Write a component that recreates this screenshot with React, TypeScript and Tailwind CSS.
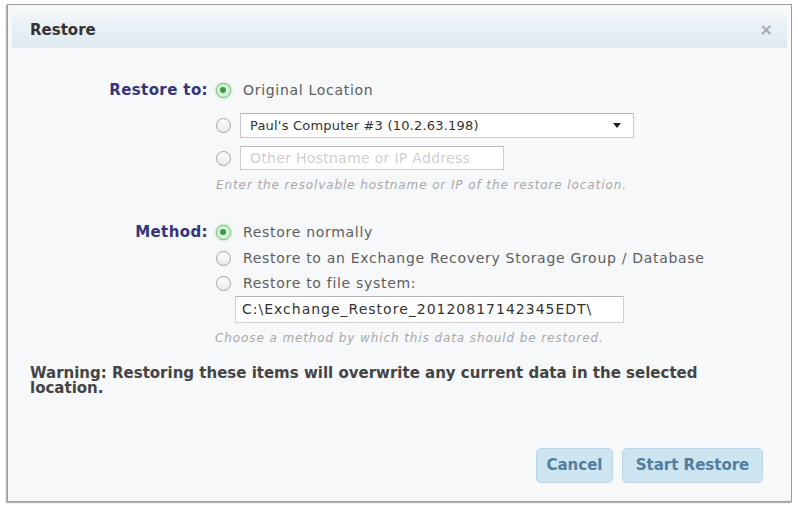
import React from 'react';

const FONT = { fontFamily: '"DejaVu Sans", Verdana, sans-serif' };

function Radio({ checked = false }: { checked?: boolean }) {
    if (checked) {
        return (
            <span className="flex h-[15px] w-[15px] items-center justify-center rounded-full border border-[#7cc27e] bg-[#d9f0d9] shadow-[0_0_3px_#8fd68f]">
                <span className="h-[6px] w-[6px] rounded-full bg-[#3f9a47]" />
            </span>
        );
    }
    return (
        <span className="block h-[15px] w-[15px] rounded-full border border-[#a3a3a3] bg-gradient-to-b from-white to-[#e9e9e9]" />
    );
}

function Label({ children }: { children?: React.ReactNode }) {
    return (
        <div className="w-[196px] shrink-0 text-right text-[15px] font-bold tracking-[0.4px] text-[#35347c]">
            {children}
        </div>
    );
}

function Row({ label, checked, children, className = '' }: { label?: string; checked?: boolean; children: React.ReactNode; className?: string }) {
    return (
        <div className={`flex items-center ${className}`}>
            <Label>{label}</Label>
            <div className="flex w-[32px] shrink-0 justify-center pr-[2px]">
                <Radio checked={checked} />
            </div>
            {children}
        </div>
    );
}

export default function App() {
    return (
        <div className="h-[506px] w-[798px] overflow-hidden bg-white pl-[7px] pt-[4px]" style={FONT}>
            <div className="flex h-[498px] w-[785px] flex-col border border-[#9d9d9d] bg-[#f6f8fa] p-[4px] pt-[8px] shadow-[-1px_1px_1px_#b5b5b5]">
                {/* title bar */}
                <div className="flex h-[35px] shrink-0 items-center justify-between rounded-t-[5px] border-b border-[#e3ebf1] bg-gradient-to-b from-[#f1f6f9] to-[#dde9f1] pl-[18px] pr-[14px]">
                    <span className="text-[15px] font-bold text-[#333]">Restore</span>
                    <span className="text-[16px] font-bold leading-none text-[#a2a8ad]">×</span>
                </div>

                <div className="flex flex-1 flex-col pt-[30px] text-[14px] tracking-[0.7px] text-[#5e5e5e]">
                    <Row label="Restore to:" checked className="h-[24px]">
                        <span className="pl-[3px]">Original Location</span>
                    </Row>
                    <Row className="mt-[11px] h-[25px]">
                        <div className="flex h-[25px] w-[394px] items-center justify-between border border-[#c9c9c9] border-t-[#b3b3b3] bg-white pl-[9px] pr-[12px] text-[13px] tracking-[0.2px] text-[#333]">
                            <span>Paul's Computer #3 (10.2.63.198)</span>
                            <svg width="8" height="5" viewBox="0 0 8 5">
                                <path d="M0 0 H8 L4 5 Z" fill="#222" />
                            </svg>
                        </div>
                    </Row>
                    <Row className="mt-[8px] h-[24px]">
                        <div className="flex h-[24px] w-[264px] items-center border border-[#cfcfcf] border-t-[#bababa] bg-white pl-[9px] text-[14px] tracking-[0.3px] text-[#d0d0d0]">
                            Other Hostname or IP Address
                        </div>
                    </Row>
                    <div className="mt-[7px] flex h-[16px] items-center">
                        <div className="w-[204px] shrink-0" />
                        <span className="text-[12px] italic tracking-[0.9px] text-[#a9a9a9]">
                            Enter the resolvable hostname or IP of the restore location.
                        </span>
                    </div>

                    <Row label="Method:" checked className="mt-[26px] h-[26px]">
                        <span className="pl-[3px]">Restore normally</span>
                    </Row>
                    <Row className="h-[26px]">
                        <span className="pl-[3px]">Restore to an Exchange Recovery Storage Group / Database</span>
                    </Row>
                    <Row className="h-[25px]">
                        <span className="pl-[3px]">Restore to file system:</span>
                    </Row>
                    <div className="flex">
                        <div className="w-[223px] shrink-0" />
                        <div className="flex h-[27px] w-[389px] items-center border border-[#cfcfcf] border-t-[#b5b5b5] bg-white pl-[6px] text-[14px] tracking-[1px] text-[#333]">
                            C:\Exchange_Restore_20120817142345EDT\
                        </div>
                    </div>
                    <div className="mt-[7px] flex h-[16px] items-center">
                        <div className="w-[203px] shrink-0" />
                        <span className="text-[12px] italic tracking-[0.9px] text-[#a9a9a9]">
                            Choose a method by which this data should be restored.
                        </span>
                    </div>

                    <p className="mt-[20px] w-[720px] pl-[18px] text-[15px] font-bold leading-[15px] tracking-normal text-[#444]">
                        Warning: Restoring these items will overwrite any current data in the selected location.
                    </p>

                    {/* footer buttons */}
                    <div className="mt-auto flex justify-end gap-[9px] pb-[14px] pr-[24px]">
                        <button className="h-[35px] w-[77px] rounded-[5px] border border-[#b9d6e6] bg-[#cde4f1] text-[15px] font-bold tracking-normal text-[#527e9e]">
                            Cancel
                        </button>
                        <button className="h-[35px] w-[141px] rounded-[5px] border border-[#b9d6e6] bg-[#cde4f1] text-[15px] font-bold tracking-normal text-[#527e9e]">
                            Start Restore
                        </button>
                    </div>
                </div>
            </div>
        </div>
    );
}
